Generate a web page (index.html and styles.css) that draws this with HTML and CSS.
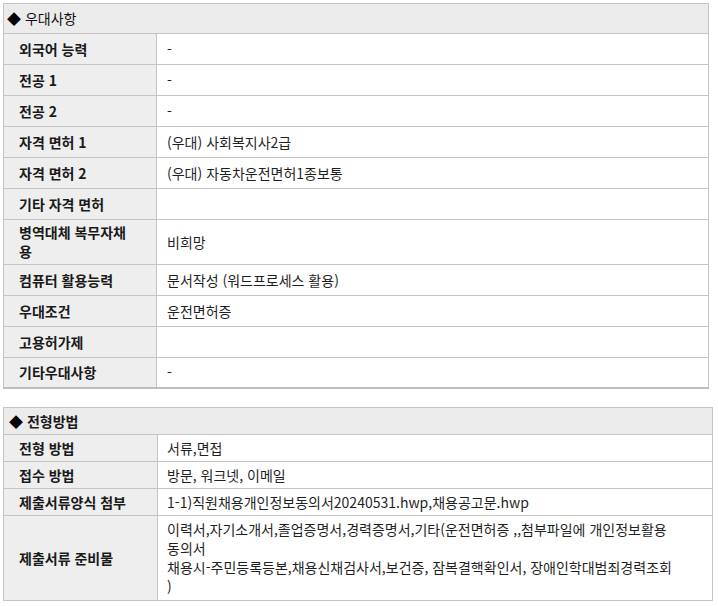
FILE: index.html
```html
<!DOCTYPE html>
<html lang="ko">
<head>
<meta charset="utf-8">
<link rel="stylesheet" href="styles.css">
</head>
<body>
<div class="page">
  <table class="info info-pref">
    <colgroup><col class="col-label"><col></colgroup>
    <tr><th class="cap" colspan="2"><span class="dia">◆</span> 우대사항</th></tr>
    <tr><th>외국어 능력</th><td>-</td></tr>
    <tr><th>전공 1</th><td>-</td></tr>
    <tr><th>전공 2</th><td>-</td></tr>
    <tr><th>자격 면허 1</th><td>(우대) 사회복지사2급</td></tr>
    <tr><th>자격 면허 2</th><td>(우대) 자동차운전면허1종보통</td></tr>
    <tr><th>기타 자격 면허</th><td></td></tr>
    <tr><th>병역대체 복무자채<br>용</th><td>비희망</td></tr>
    <tr><th>컴퓨터 활용능력</th><td>문서작성 (워드프로세스 활용)</td></tr>
    <tr><th>우대조건</th><td>운전면허증</td></tr>
    <tr><th>고용허가제</th><td></td></tr>
    <tr><th>기타우대사항</th><td>-</td></tr>
  </table>

  <table class="info info-sel">
    <colgroup><col class="col-label"><col></colgroup>
    <tr><th class="cap" colspan="2"><span class="dia">◆</span> 전형방법</th></tr>
    <tr><th>전형 방법</th><td>서류,면접</td></tr>
    <tr><th>접수 방법</th><td>방문, 워크넷, 이메일</td></tr>
    <tr><th>제출서류양식 첨부</th><td>1-1)직원채용개인정보동의서20240531.hwp,채용공고문.hwp</td></tr>
    <tr><th>제출서류 준비물</th><td class="multi">이력서,자기소개서,졸업증명서,경력증명서,기타(운전면허증 ,,첨부파일에 개인정보활용<br>동의서<br>채용시-주민등록등본,채용신채검사서,보건증, 잠복결핵확인서, 장애인학대범죄경력조회<br>)</td></tr>
  </table>
</div>
</body>
</html>
```

FILE: styles.css
```css
html, body {
  margin: 0;
  padding: 0;
  background: #ffffff;
}

body {
  font-family: "Noto Sans CJK KR", "Noto Sans", sans-serif;
  font-size: 14px;
  color: #222222;
}

.page {
  padding: 3px 0 0 3px;
  display: flex;
  flex-direction: column;
  align-items: flex-start;
  gap: 18px;
}

.info {
  border-collapse: collapse;
  table-layout: fixed;
}

.info th,
.info td {
  border: 1px solid #c4c4c4;
  line-height: 19px;
  text-align: left;
  vertical-align: middle;
  white-space: nowrap;
}

.info th {
  font-weight: bold;
  background: #eeeeee;
  color: #1a1a1a;
}

.info td {
  font-weight: normal;
  background: #ffffff;
  color: #1f1f1f;
}

.info th.cap {
  background: #ebebeb;
}

.dia {
  color: #000000;
}

/* 우대사항 */
.info-pref {
  width: 706px;
}

.info-pref .col-label {
  width: 153px;
}

.info-pref th,
.info-pref td {
  height: 24px;
  padding: 3px 10px;
}

.info-pref th {
  padding-left: 15px;
}

.info-pref th.cap {
  height: 23px;
  font-weight: normal;
  color: #111111;
  padding-left: 3px;
}

.info-pref tr:last-child th,
.info-pref tr:last-child td {
  height: 23px;
  border-bottom: 2px solid #bdbdbd;
}

/* 전형방법 */
.info-sel {
  width: 710px;
}

.info-sel .col-label {
  width: 154px;
}

.info-sel th,
.info-sel td {
  height: 20px;
  padding: 3px 10px 3px 9px;
}

.info-sel th {
  padding-left: 15px;
}

.info-sel th.cap {
  padding-left: 5px;
}

.info-sel td.multi {
  padding-top: 4px;
  padding-bottom: 4px;
}
```
